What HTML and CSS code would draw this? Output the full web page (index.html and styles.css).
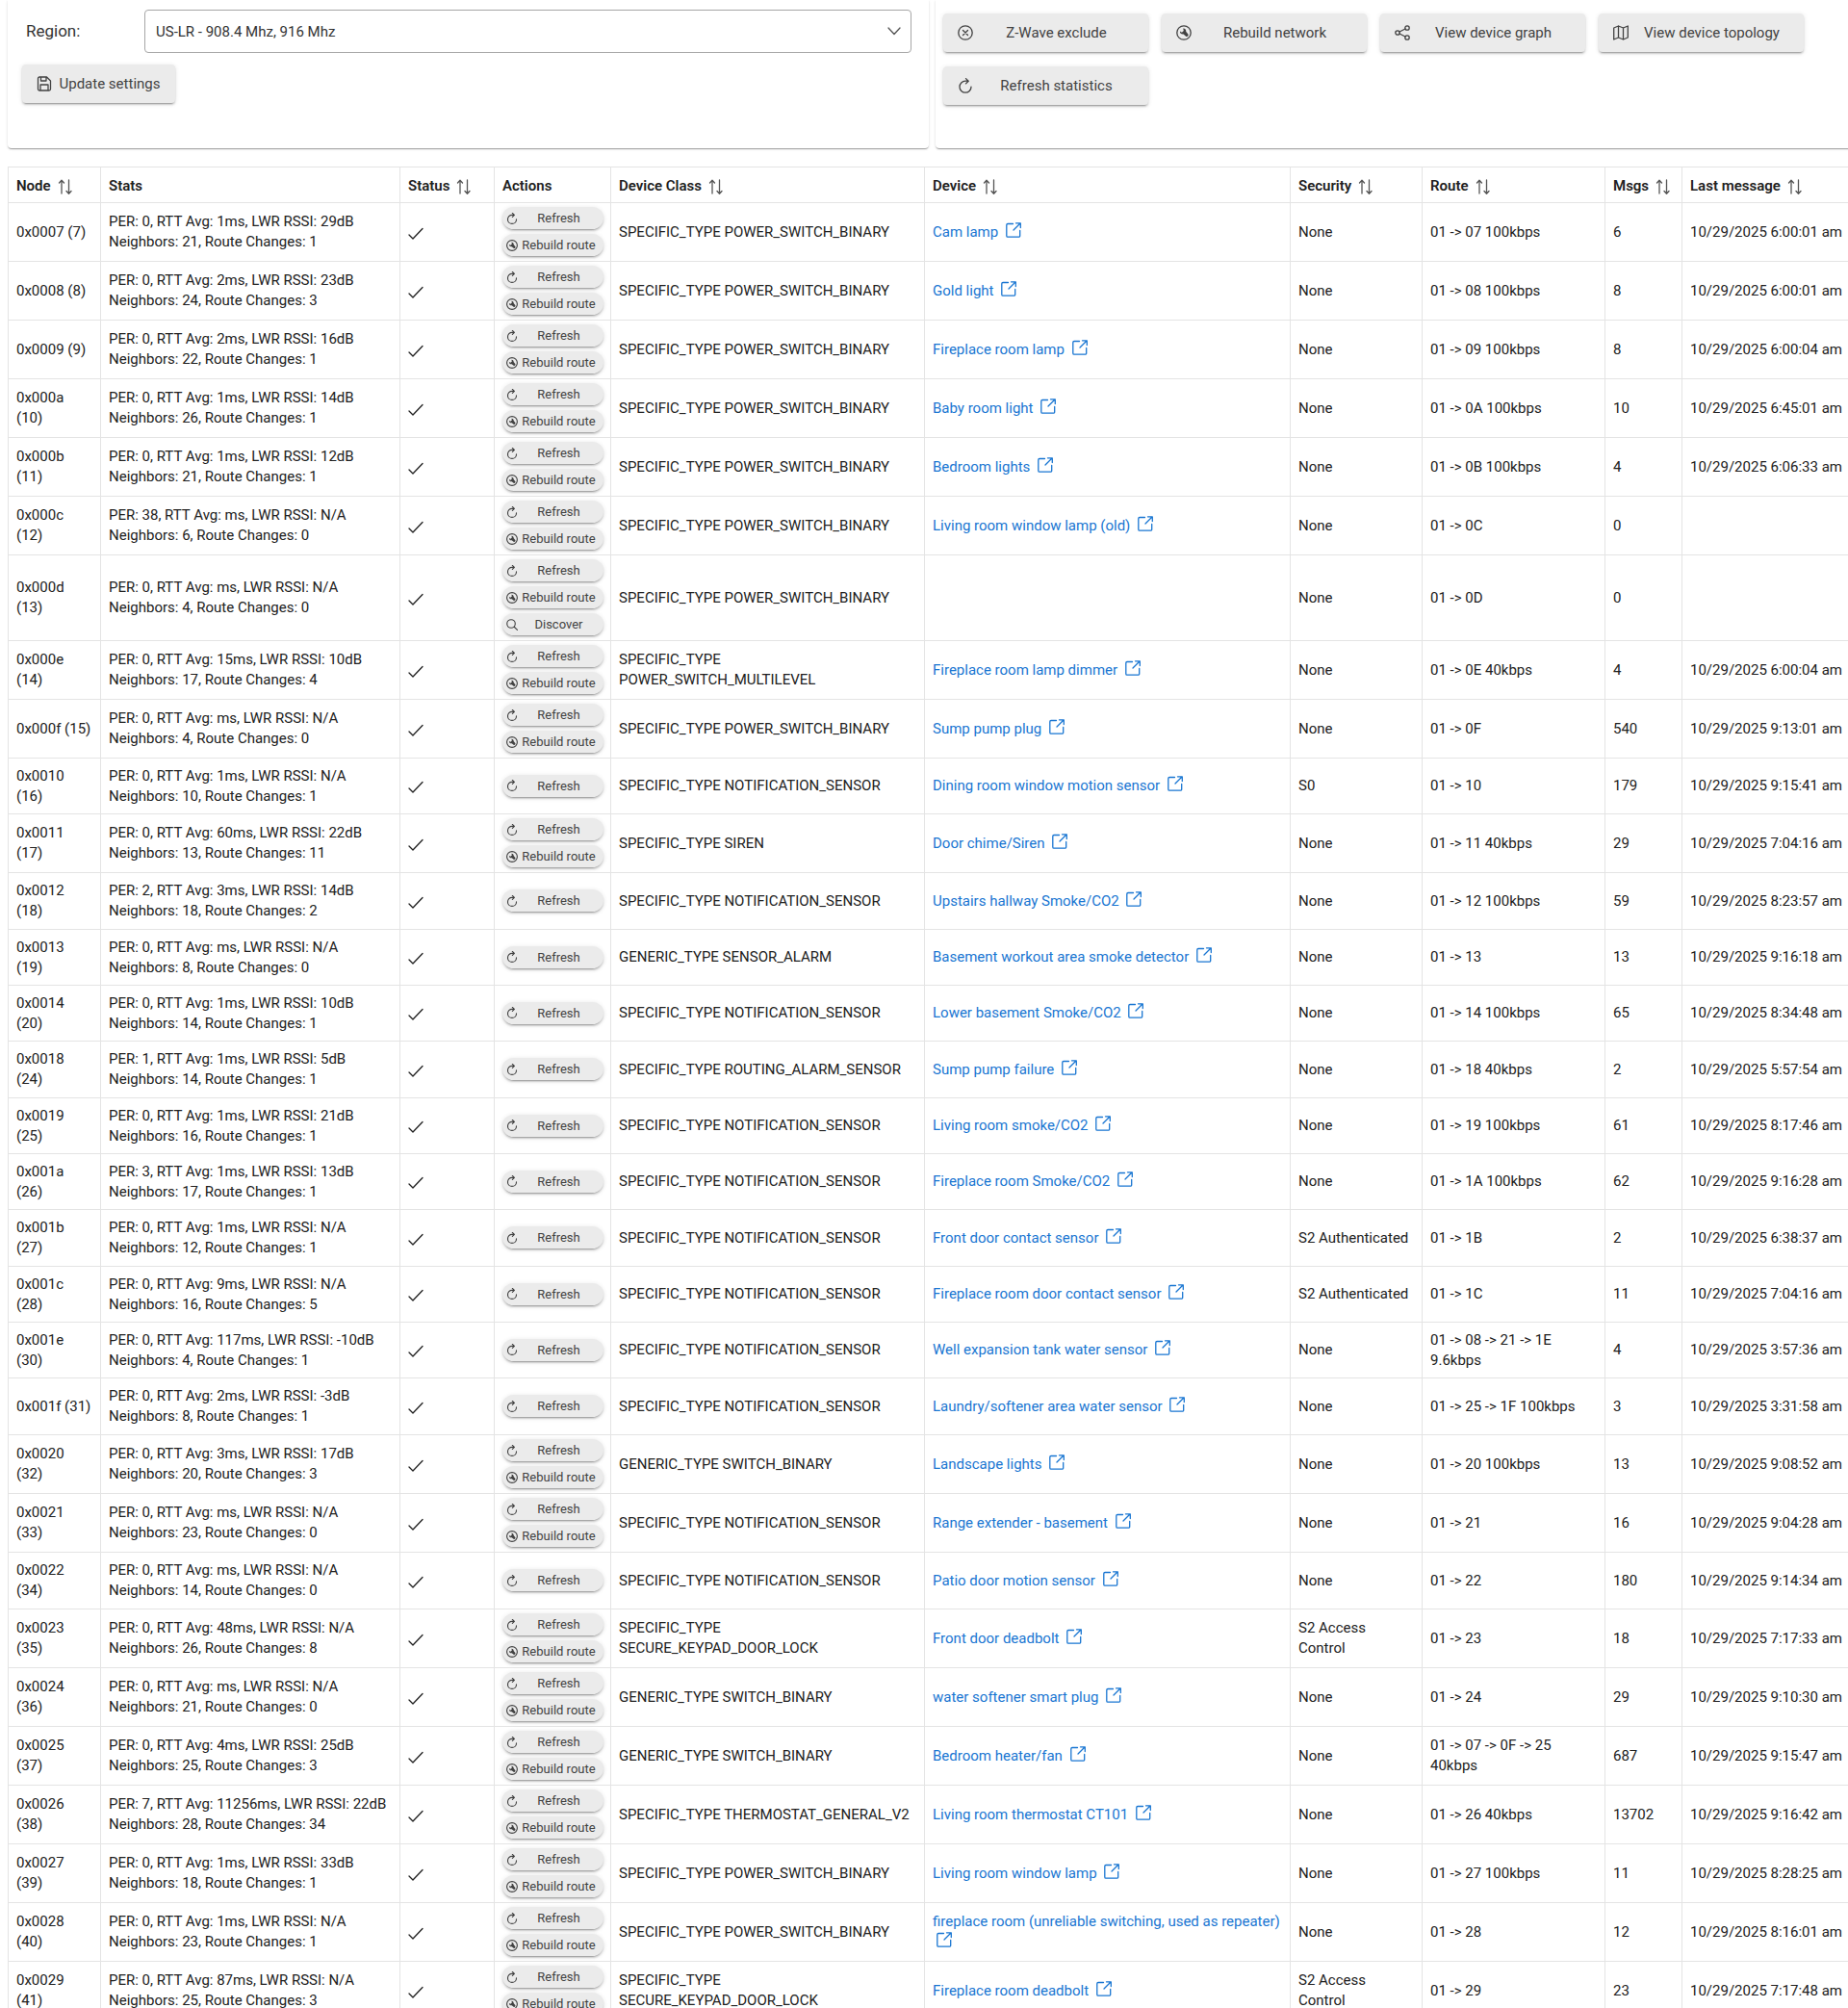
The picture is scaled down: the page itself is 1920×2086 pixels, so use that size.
FILE: index.html
```
<!DOCTYPE html>
<html lang="en">
<head>
    <meta charset="utf-8">
    <title>Z-Wave</title>
    <link rel="stylesheet" href="styles.css">
</head>
<body>
    <svg class="sprite">
        <symbol id="i-sort" viewBox="0 0 16 16"><path d="M4 15V1.500M1.500 4L4 1.300 6.500 4M11.500 1v13.500M9 12.500l2.500 2.700 2.500-2.700"/></symbol>
        <symbol id="i-check" viewBox="0 0 16 16"><path d="M1 10l4 4L15 3.500"/></symbol>
        <symbol id="i-refresh" viewBox="0 0 16 16"><path d="M8 3.200a6 6 0 1 0 6 6M8 3.200h3M8.500.600L11.200 3.200 8.500 5.900"/></symbol>
        <symbol id="i-wrench" viewBox="0 0 16 16"><circle cx="8" cy="8" r="7.200"/><path class="fill" d="M7.200 3.600c2-.2 3.400 1.300 3 3.200l2.200 2.600c1 1.500-.9 3.200-2.300 2.300L7.600 9.500C5.600 10 3.700 8.600 4 6.500l1.900 1.200L7.800 6z"/></symbol>
        <symbol id="i-search" viewBox="0 0 16 16"><circle cx="6.700" cy="6.700" r="5.700"/><path d="M11 11l4.300 4.300"/></symbol>
        <symbol id="i-times" viewBox="0 0 16 16"><circle cx="8" cy="8" r="7.200"/><path d="M5.500 5.500l5 5M10.500 5.500l-5 5"/></symbol>
        <symbol id="i-share" viewBox="0 0 16 16"><circle cx="13" cy="3" r="2.200"/><circle cx="3" cy="8" r="2.200"/><circle cx="13" cy="13" r="2.200"/><path d="M5 7l6-3M5 9l6 3"/></symbol>
        <symbol id="i-map" viewBox="0 0 16 16"><path d="M.7 3L5.500 1l5 2 4.800-2v12l-4.800 2-5-2L.7 15zM5.500 1v12M10.500 3v12"/></symbol>
        <symbol id="i-save" viewBox="0 0 16 16"><path d="M3 1h7.500L14.500 5v8.500a1.500 1.500 0 0 1-1.500 1.500H3a1.500 1.500 0 0 1-1.500-1.500V2.500A1.500 1.500 0 0 1 3 1zM4.500 1v4h5.500V1M4 15V9h8v6"/></symbol>
        <symbol id="i-link" viewBox="0 0 16 16"><path d="M7.500 1.500H2A1.200 1.200 0 0 0 .800 2.700V14A1.200 1.200 0 0 0 2 15.200h11.500A1.200 1.200 0 0 0 14.700 14V8.500M8 8l7-7M10.500.800h4.800v4.800"/></symbol>
        <symbol id="i-down" viewBox="0 0 16 16"><path d="M2 5l6 6.500L14 5"/></symbol>
    </svg>

    <div class="page">
        <div class="panels">
            <div class="panel settings">
                <div class="field">
                    <label for="region">Region:</label>
                    <div class="select">
                        <select id="region">
                            <option>US-LR - 908.4 Mhz, 916 Mhz</option>
                        </select>
                        <svg class="icon arrow"><use href="#i-down"/></svg>
                    </div>
                </div>
                <button class="button save"><svg class="icon"><use href="#i-save"/></svg><span>Update settings</span></button>
            </div>
            <div class="panel tools">
                <button class="button"><svg class="icon"><use href="#i-times"/></svg><span>Z-Wave exclude</span></button>
                <button class="button"><svg class="icon"><use href="#i-wrench"/></svg><span>Rebuild network</span></button>
                <button class="button"><svg class="icon"><use href="#i-share"/></svg><span>View device graph</span></button>
                <button class="button"><svg class="icon"><use href="#i-map"/></svg><span>View device topology</span></button>
                <button class="button"><svg class="icon"><use href="#i-refresh"/></svg><span>Refresh statistics</span></button>
            </div>
        </div>

        <table class="nodes">
            <colgroup>
                <col class="c-node"><col class="c-stats"><col class="c-status"><col class="c-actions"><col class="c-class">
                <col class="c-device"><col class="c-security"><col class="c-route"><col class="c-msgs"><col class="c-last">
            </colgroup>
            <thead>
                <tr>
                    <th>Node<svg class="icon sort"><use href="#i-sort"/></svg></th>
                    <th>Stats</th>
                    <th>Status<svg class="icon sort"><use href="#i-sort"/></svg></th>
                    <th>Actions</th>
                    <th>Device Class<svg class="icon sort"><use href="#i-sort"/></svg></th>
                    <th>Device<svg class="icon sort"><use href="#i-sort"/></svg></th>
                    <th>Security<svg class="icon sort"><use href="#i-sort"/></svg></th>
                    <th>Route<svg class="icon sort"><use href="#i-sort"/></svg></th>
                    <th>Msgs<svg class="icon sort"><use href="#i-sort"/></svg></th>
                    <th>Last message<svg class="icon sort"><use href="#i-sort"/></svg></th>
                </tr>
            </thead>
            <tbody id="rows"></tbody>
        </table>
    </div>
    <script src="nodes.js"></script>
</body>
</html>
```

FILE: styles.css
```
body {
	margin: 0;
	background-color: #fff;
	color: #212121;
	font-family: Roboto, "Liberation Sans", sans-serif;
	font-size: 15px;
	line-height: 21px;
	overflow-x: hidden;
}

.sprite {
	display: none;
}

/* the page is a little wider than the window, the right edge runs out of view */
.page {
	margin: 0 -8px 0 8px;
}

.icon {
	width: 16px;
	height: 16px;
	flex: none;
	fill: none;
	stroke: currentColor;
	stroke-width: 1.3;
	stroke-linecap: round;
	stroke-linejoin: round;
}

.fill {
	fill: currentColor;
	stroke: none;
}

.panels {
	display: grid;
	grid-template-columns: 1fr 1fr;
	gap: 7px;
	margin-bottom: 19px;
}

.panel {
	box-sizing: border-box;
	min-height: 154px;
	border-radius: 0 0 4px 4px;
	box-shadow: 0 2px 1px -1px rgba(0,0,0,0.2), 0 1px 1px 0 rgba(0,0,0,0.14), 0 1px 3px 0 rgba(0,0,0,0.12);
}

.settings {
	padding: 10px 18px 0 15px;
}

.field {
	display: flex;
	align-items: center;
	margin-bottom: 12px;
}

.field label {
	width: 127px;
	padding-left: 4px;
	box-sizing: border-box;
	font-size: 17px;
	color: #333;
}

.select {
	flex: 1;
	display: flex;
	position: relative;
}

.select select {
	flex: 1;
	height: 45px;
	padding: 0 11px;
	border: 1px solid #a6a6a6;
	border-radius: 4px;
	appearance: none;
	background-color: #fff;
	color: #333;
	font-family: inherit;
	font-size: 15px;
}

/* arrow lies over the select box */
.arrow {
	position: absolute;
	right: 10px;
	top: 14px;
	color: #555;
	pointer-events: none;
}

.button {
	display: flex;
	align-items: center;
	width: 213px;
	height: 40px;
	padding: 0 15px;
	border: none;
	border-radius: 4px;
	background-color: #ebebeb;
	box-shadow: 0 3px 1px -2px rgba(0,0,0,0.2), 0 2px 2px 0 rgba(0,0,0,0.14), 0 1px 5px 0 rgba(0,0,0,0.12);
	color: #424242;
	font-family: inherit;
	font-size: 15px;
	cursor: pointer;
}

.button span {
	flex: 1;
	margin-left: 7px;
	text-align: center;
	white-space: nowrap;
}

.save {
	width: 159px;
}

.tools {
	display: flex;
	flex-wrap: wrap;
	align-content: flex-start;
	gap: 15px 14px;
	padding: 14px 8px 0;
}

.nodes {
	width: 100%;
	table-layout: fixed;
	border-collapse: collapse;
}

.c-node { width: 96px; }
.c-stats { width: 311px; }
.c-status { width: 98px; }
.c-actions { width: 121px; }
.c-class { width: 326px; }
.c-device { width: 380px; }
.c-security { width: 137px; }
.c-route { width: 190px; }
.c-msgs { width: 80px; }

.nodes th, .nodes td {
	box-sizing: border-box;
	padding: 4px 8px;
	border: 1px solid #e4e4e4;
	text-align: left;
}

.nodes th {
	height: 37px;
	padding-top: 6px;
	font-weight: 600;
	white-space: nowrap;
}

.nodes td {
	height: 58px;
}

.nodes tr:nth-child(3n) td {
	height: 59px;
}

.nodes td > .icon {
	vertical-align: -4px;
}

.sort {
	margin-left: 7px;
	vertical-align: -4px;
	color: #555;
}

.nodes a {
	color: #1976d2;
	text-decoration: none;
}

.nodes a .icon {
	margin-left: 4px;
	vertical-align: -1px;
}

.actions {
	display: flex;
	flex-direction: column;
	gap: 5px;
	padding-bottom: 1px;
}

.small {
	width: 105px;
	height: 23px;
	padding: 0 8px 0 4px;
	border-radius: 12px;
	font-size: 13px;
}

.small .icon {
	width: 12px;
	height: 12px;
	stroke-width: 1.5;
}

.small span {
	margin-left: 4px;
}
```

FILE: nodes.js
```
// node, per, rtt, rssi, neighbors, route changes, buttons, device class, device, security, route, messages, last message
var R = "r", RB = "rb", RBD = "rbd";
var BIN = "SPECIFIC_TYPE POWER_SWITCH_BINARY";
var NOTIF = "SPECIFIC_TYPE NOTIFICATION_SENSOR";
var LOCK = "SPECIFIC_TYPE SECURE_KEYPAD_DOOR_LOCK";
var nodes = [
    ["0x0007 (7)", "0", "1ms", "29dB", 21, 1, RB, BIN, "Cam lamp", "None", "01 -> 07 100kbps", 6, "6:00:01"],
    ["0x0008 (8)", "0", "2ms", "23dB", 24, 3, RB, BIN, "Gold light", "None", "01 -> 08 100kbps", 8, "6:00:01"],
    ["0x0009 (9)", "0", "2ms", "16dB", 22, 1, RB, BIN, "Fireplace room lamp", "None", "01 -> 09 100kbps", 8, "6:00:04"],
    ["0x000a (10)", "0", "1ms", "14dB", 26, 1, RB, BIN, "Baby room light", "None", "01 -> 0A 100kbps", 10, "6:45:01"],
    ["0x000b (11)", "0", "1ms", "12dB", 21, 1, RB, BIN, "Bedroom lights", "None", "01 -> 0B 100kbps", 4, "6:06:33"],
    ["0x000c (12)", "38", "ms", "N/A", 6, 0, RB, BIN, "Living room window lamp (old)", "None", "01 -> 0C", 0, ""],
    ["0x000d (13)", "0", "ms", "N/A", 4, 0, RBD, BIN, "", "None", "01 -> 0D", 0, ""],
    ["0x000e (14)", "0", "15ms", "10dB", 17, 4, RB, "SPECIFIC_TYPE POWER_SWITCH_MULTILEVEL", "Fireplace room lamp dimmer", "None", "01 -> 0E 40kbps", 4, "6:00:04"],
    ["0x000f (15)", "0", "ms", "N/A", 4, 0, RB, BIN, "Sump pump plug", "None", "01 -> 0F", 540, "9:13:01"],
    ["0x0010 (16)", "0", "1ms", "N/A", 10, 1, R, NOTIF, "Dining room window motion sensor", "S0", "01 -> 10", 179, "9:15:41"],
    ["0x0011 (17)", "0", "60ms", "22dB", 13, 11, RB, "SPECIFIC_TYPE SIREN", "Door chime/Siren", "None", "01 -> 11 40kbps", 29, "7:04:16"],
    ["0x0012 (18)", "2", "3ms", "14dB", 18, 2, R, NOTIF, "Upstairs hallway Smoke/CO2", "None", "01 -> 12 100kbps", 59, "8:23:57"],
    ["0x0013 (19)", "0", "ms", "N/A", 8, 0, R, "GENERIC_TYPE SENSOR_ALARM", "Basement workout area smoke detector", "None", "01 -> 13", 13, "9:16:18"],
    ["0x0014 (20)", "0", "1ms", "10dB", 14, 1, R, NOTIF, "Lower basement Smoke/CO2", "None", "01 -> 14 100kbps", 65, "8:34:48"],
    ["0x0018 (24)", "1", "1ms", "5dB", 14, 1, R, "SPECIFIC_TYPE ROUTING_ALARM_SENSOR", "Sump pump failure", "None", "01 -> 18 40kbps", 2, "5:57:54"],
    ["0x0019 (25)", "0", "1ms", "21dB", 16, 1, R, NOTIF, "Living room smoke/CO2", "None", "01 -> 19 100kbps", 61, "8:17:46"],
    ["0x001a (26)", "3", "1ms", "13dB", 17, 1, R, NOTIF, "Fireplace room Smoke/CO2", "None", "01 -> 1A 100kbps", 62, "9:16:28"],
    ["0x001b (27)", "0", "1ms", "N/A", 12, 1, R, NOTIF, "Front door contact sensor", "S2 Authenticated", "01 -> 1B", 2, "6:38:37"],
    ["0x001c (28)", "0", "9ms", "N/A", 16, 5, R, NOTIF, "Fireplace room door contact sensor", "S2 Authenticated", "01 -> 1C", 11, "7:04:16"],
    ["0x001e (30)", "0", "117ms", "-10dB", 4, 1, R, NOTIF, "Well expansion tank water sensor", "None", "01 -> 08 -> 21 -> 1E 9.6kbps", 4, "3:57:36"],
    ["0x001f (31)", "0", "2ms", "-3dB", 8, 1, R, NOTIF, "Laundry/softener area water sensor", "None", "01 -> 25 -> 1F 100kbps", 3, "3:31:58"],
    ["0x0020 (32)", "0", "3ms", "17dB", 20, 3, RB, "GENERIC_TYPE SWITCH_BINARY", "Landscape lights", "None", "01 -> 20 100kbps", 13, "9:08:52"],
    ["0x0021 (33)", "0", "ms", "N/A", 23, 0, RB, NOTIF, "Range extender - basement", "None", "01 -> 21", 16, "9:04:28"],
    ["0x0022 (34)", "0", "ms", "N/A", 14, 0, R, NOTIF, "Patio door motion sensor", "None", "01 -> 22", 180, "9:14:34"],
    ["0x0023 (35)", "0", "48ms", "N/A", 26, 8, RB, LOCK, "Front door deadbolt", "S2 Access Control", "01 -> 23", 18, "7:17:33"],
    ["0x0024 (36)", "0", "ms", "N/A", 21, 0, RB, "GENERIC_TYPE SWITCH_BINARY", "water softener smart plug", "None", "01 -> 24", 29, "9:10:30"],
    ["0x0025 (37)", "0", "4ms", "25dB", 25, 3, RB, "GENERIC_TYPE SWITCH_BINARY", "Bedroom heater/fan", "None", "01 -> 07 -> 0F -> 25 40kbps", 687, "9:15:47"],
    ["0x0026 (38)", "7", "11256ms", "22dB", 28, 34, RB, "SPECIFIC_TYPE THERMOSTAT_GENERAL_V2", "Living room thermostat CT101", "None", "01 -> 26 40kbps", 13702, "9:16:42"],
    ["0x0027 (39)", "0", "1ms", "33dB", 18, 1, RB, BIN, "Living room window lamp", "None", "01 -> 27 100kbps", 11, "8:28:25"],
    ["0x0028 (40)", "0", "1ms", "N/A", 23, 1, RB, BIN, "fireplace room (unreliable switching, used as repeater)", "None", "01 -> 28", 12, "8:16:01"],
    ["0x0029 (41)", "0", "87ms", "N/A", 25, 3, RB, LOCK, "Fireplace room deadbolt", "S2 Access Control", "01 -> 29", 23, "7:17:48"]
];

function icon(name) {
    return '<svg class="icon"><use href="#i-' + name + '"/></svg>';
}

function smallButton(name, text) {
    return '<button class="button small">' + icon(name) + '<span>' + text + '</span></button>';
}

var html = "";
nodes.forEach(function(n) {
    var buttons = smallButton("refresh", "Refresh");
    if (n[6] != R) buttons += smallButton("wrench", "Rebuild route");
    if (n[6] == RBD) buttons += smallButton("search", "Discover");
    var cells = [
        n[0],
        "PER: " + n[1] + ", RTT Avg: " + n[2] + ", LWR RSSI: " + n[3] + "<br>Neighbors: " + n[4] + ", Route Changes: " + n[5],
        icon("check"),
        '<div class="actions">' + buttons + '</div>',
        n[7],
        n[8] ? '<a href="#">' + n[8] + ' ' + icon("link") + '</a>' : "",
        n[9],
        n[10].replace(/>/g, "&gt;"),
        n[11],
        n[12] ? "10/29/2025 " + n[12] + " am" : ""
    ];
    html += "<tr><td>" + cells.join("</td><td>") + "</td></tr>";
});
document.getElementById("rows").innerHTML = html;
```
